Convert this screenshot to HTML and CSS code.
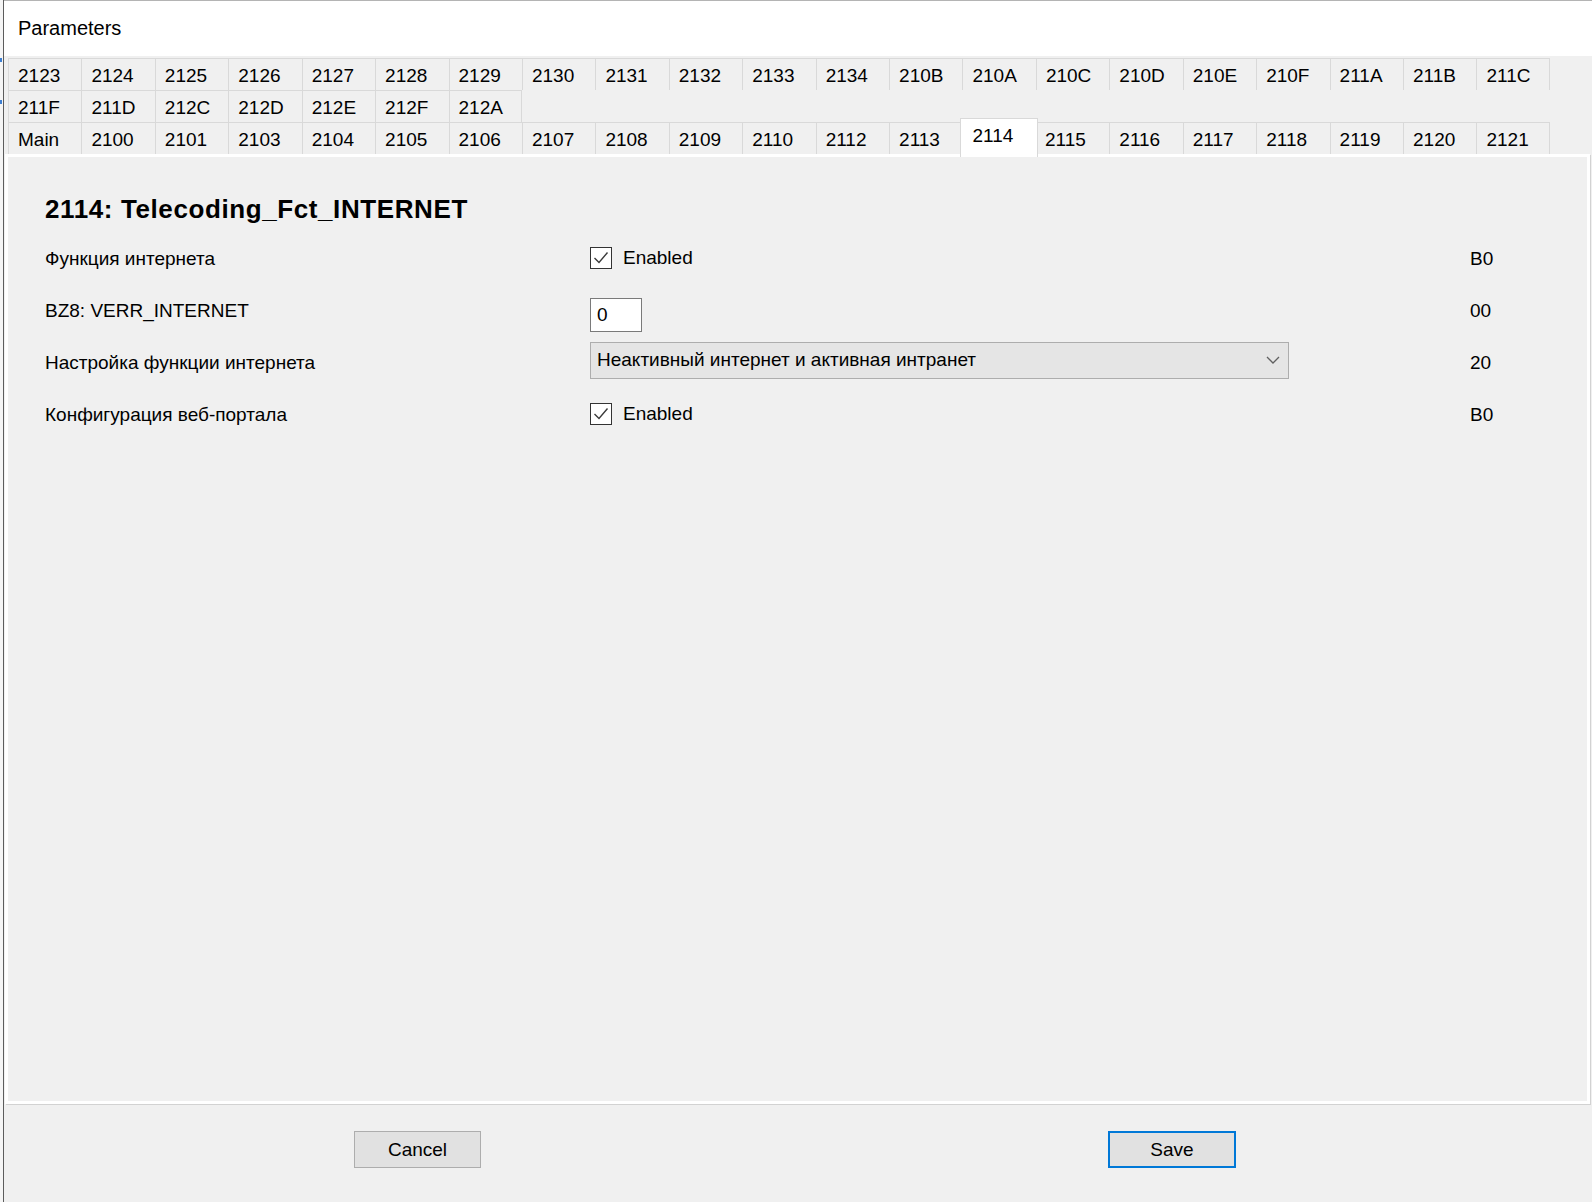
FILE: index.html
```html
<!DOCTYPE html>
<html lang="ru">
<head>
    <meta charset="UTF-8">
    <meta name="viewport" content="width=device-width, initial-scale=1.0">
    <title>Parameters</title>
    <link rel="stylesheet" href="styles.css">
</head>
<body>
<div class="screen">
    <div class="edge">
        <span class="tick tick-a"></span>
        <span class="tick tick-b"></span>
    </div>

    <div class="window">
        <div class="titlebar">Parameters</div>

        <div class="tabstrip">
            <div class="tab-row">
                <div class="tab">2123</div><div class="tab">2124</div><div class="tab">2125</div>
                <div class="tab">2126</div><div class="tab">2127</div><div class="tab">2128</div>
                <div class="tab">2129</div><div class="tab">2130</div><div class="tab">2131</div>
                <div class="tab">2132</div><div class="tab">2133</div><div class="tab">2134</div>
                <div class="tab">210B</div><div class="tab">210A</div><div class="tab">210C</div>
                <div class="tab">210D</div><div class="tab">210E</div><div class="tab">210F</div>
                <div class="tab">211A</div><div class="tab">211B</div><div class="tab">211C</div>
            </div>
            <div class="tab-row">
                <div class="tab">211F</div><div class="tab">211D</div><div class="tab">212C</div>
                <div class="tab">212D</div><div class="tab">212E</div><div class="tab">212F</div>
                <div class="tab">212A</div>
            </div>
            <div class="tab-row">
                <div class="tab">Main</div><div class="tab">2100</div><div class="tab">2101</div>
                <div class="tab">2103</div><div class="tab">2104</div><div class="tab">2105</div>
                <div class="tab">2106</div><div class="tab">2107</div><div class="tab">2108</div>
                <div class="tab">2109</div><div class="tab">2110</div><div class="tab">2112</div>
                <div class="tab">2113</div><div class="tab tab-active">2114</div><div class="tab">2115</div>
                <div class="tab">2116</div><div class="tab">2117</div><div class="tab">2118</div>
                <div class="tab">2119</div><div class="tab">2120</div><div class="tab">2121</div>
            </div>
        </div>

        <div class="panel">
            <h1 class="page-title">2114: Telecoding_Fct_INTERNET</h1>

            <div class="params">
                <div class="param-label">Функция интернета</div>
                <div class="param-control">
                    <label class="check">
                        <span class="check-box">
                            <svg width="20" height="20" viewBox="0 0 20 20"><polyline points="3.5,10 8,14.5 16.5,4.5" fill="none" stroke="#3a3a3a" stroke-width="1.4"/></svg>
                        </span>
                        Enabled
                    </label>
                </div>
                <div class="param-value">B0</div>

                <div class="param-label">BZ8: VERR_INTERNET</div>
                <div class="param-control">
                    <div class="textbox">0</div>
                </div>
                <div class="param-value">00</div>

                <div class="param-label">Настройка функции интернета</div>
                <div class="param-control">
                    <div class="combo">
                        <span>Неактивный интернет и активная интранет</span>
                        <svg width="14" height="8" viewBox="0 0 14 8"><polyline points="1,1 7,7 13,1" fill="none" stroke="#606060" stroke-width="1.3"/></svg>
                    </div>
                </div>
                <div class="param-value">20</div>

                <div class="param-label">Конфигурация веб-портала</div>
                <div class="param-control">
                    <label class="check">
                        <span class="check-box">
                            <svg width="20" height="20" viewBox="0 0 20 20"><polyline points="3.5,10 8,14.5 16.5,4.5" fill="none" stroke="#3a3a3a" stroke-width="1.4"/></svg>
                        </span>
                        Enabled
                    </label>
                </div>
                <div class="param-value">B0</div>
            </div>
        </div>

        <div class="footer">
            <button class="btn">Cancel</button>
            <button class="btn btn-default">Save</button>
        </div>
    </div>
</div>
</body>
</html>
```

FILE: styles.css
```css
body {
    margin: 0;
    background: #f0f0f0;
    font-family: "Liberation Sans", Arial, sans-serif;
    font-size: 19px;
    color: #000;
}
.screen {
    display: flex;
    height: 1202px;
    overflow: hidden;
}
.edge {
    width: 3px;
    background: #f5f5f5;
    display: flex;
    flex-direction: column;
}
.tick {
    display: block;
    width: 2px;
    height: 4px;
    background: #3d7ed0;
}
.tick-a {
    margin-top: 58px;
}
.tick-b {
    margin-top: 38px;
}
.window {
    flex: 1;
    display: flex;
    flex-direction: column;
    border-left: 1px solid #5c5c5c;
    background: #f0f0f0;
}
.titlebar {
    height: 55px;
    line-height: 55px;
    border-top: 1px solid #b4b4b4;
    background: #fff;
    padding-left: 14px;
    font-size: 20px;
}

/* tab headers, three rows */
.tabstrip {
    padding: 2px 0 0 4px;
}
.tab-row {
    display: flex;
    height: 32px;
}
.tab {
    box-sizing: border-box;
    width: 73.43px;
    height: 32px;
    line-height: 33px;
    padding-left: 9px;
    border-top: 1px solid #d9d9d9;
    border-left: 1px solid #d9d9d9;
    background: #f0f0f0;
}
.tab:last-child {
    border-right: 1px solid #d9d9d9;
}
.tab-active {
    position: relative;
    z-index: 1;
    width: 77.43px;
    height: 39px;
    margin: -4px -2px -3px;
    padding-left: 11px;
    line-height: 34px;
    background: #fff;
    border-right: 1px solid #d9d9d9;
}
.tab-active + .tab {
    border-left: none;
}

/* tab page */
.panel {
    box-sizing: border-box;
    height: 950px;
    margin: 0 2px 0 1px;
    border: 3px solid #fff;
    box-shadow: 1px 1px 0 #d2d2d2;
    background: #f0f0f0;
    padding: 37px 0 0 37px;
}
.page-title {
    margin: 0;
    font-size: 26px;
    line-height: 30px;
    font-weight: bold;
    letter-spacing: 0.6px;
}
.params {
    margin-top: 8px;
    display: grid;
    grid-template-columns: 545px 880px auto;
    grid-auto-rows: 52px;
    align-items: center;
}
.param-label,
.param-value {
    padding-top: 2px;
}
.check {
    display: flex;
    align-items: center;
    gap: 11px;
}
.check-box {
    box-sizing: border-box;
    width: 22px;
    height: 22px;
    border: 1px solid #333;
    background: #fff;
    display: flex;
}
.textbox {
    box-sizing: border-box;
    width: 52px;
    height: 34px;
    margin-top: 10px;
    line-height: 32px;
    padding-left: 6px;
    border: 1px solid #7a7a7a;
    background: #fff;
}
.combo {
    box-sizing: border-box;
    width: 699px;
    height: 37px;
    margin-bottom: 4px;
    display: flex;
    align-items: center;
    justify-content: space-between;
    padding: 0 8px 0 6px;
    border: 1px solid #adadad;
    background: #e5e5e5;
}

/* dialog buttons */
.footer {
    flex: 1;
    display: flex;
    align-items: flex-start;
    padding: 27px 0 0 350px;
}
.btn {
    box-sizing: border-box;
    width: 127px;
    height: 37px;
    font-family: inherit;
    font-size: 19px;
    color: #000;
    background: #e1e1e1;
    border: 1px solid #adadad;
    padding: 0;
}
.btn-default {
    width: 128px;
    margin-left: 627px;
    border: 2px solid #0078d7;
}
```
